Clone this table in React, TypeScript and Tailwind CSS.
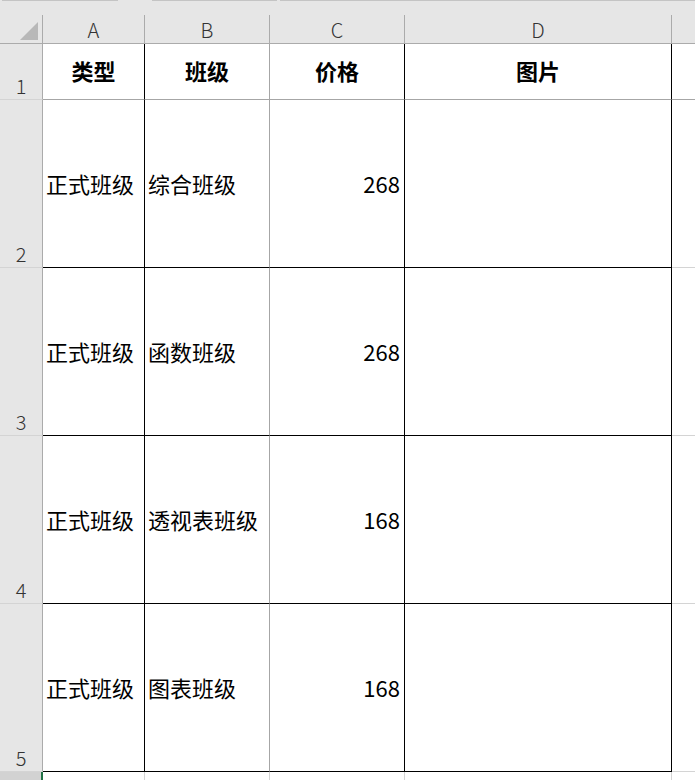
import React from "react";

const cjk = "font-['Noto_Sans_CJK_SC','Noto_Sans',sans-serif]";

const colLetters = ["A", "B", "C", "D"];

// right border per data column: A|B black, B|C plain gridline, C|D and D| black
const rightBorder = [
  "border-r border-r-black",
  "border-r border-r-[#a6a6a6]",
  "border-r border-r-black",
  "border-r border-r-black",
];

const rows = [
  { n: 1, cells: ["类型", "班级", "价格", "图片"], header: true },
  { n: 2, cells: ["正式班级", "综合班级", "268", ""] },
  { n: 3, cells: ["正式班级", "函数班级", "268", ""] },
  { n: 4, cells: ["正式班级", "透视表班级", "168", ""] },
  { n: 5, cells: ["正式班级", "图表班级", "168", ""] },
];

const Corner = () => (
  <svg width="43" height="29" viewBox="0 0 43 29" className="block">
    <polygon points="38,7 38,25 20,25" fill="#b8b8b8" />
  </svg>
);

const App: React.FC = () => {
  return (
    <div
      className={`w-[695px] h-[780px] overflow-hidden bg-white text-black ${cjk} grid grid-cols-[43px_102px_125px_135px_267px_1fr] grid-rows-[15px_29px_56px_168px_168px_168px_168px_1fr]`}
    >
      {/* top strip under the toolbar */}
      <div className="col-span-6 bg-[#e6e6e6] flex items-start">
        <div className="ml-[2px] w-[116px] h-px bg-[#c4c4c4]" />
        <div className="ml-[34px] w-[125px] h-px bg-[#c4c4c4]" />
        <div className="ml-[3px] flex-1 h-px bg-[#c4c4c4]" />
      </div>

      {/* column headers */}
      <div className="bg-[#e6e6e6] border-r border-b border-[#ababab]">
        <Corner />
      </div>
      {colLetters.map((c) => (
        <div
          key={c}
          className="bg-[#e6e6e6] border-r border-b border-[#ababab] flex items-center justify-center text-[20px] font-light text-[#333] leading-none pt-[1px]"
        >
          {c}
        </div>
      ))}
      <div className="bg-[#e6e6e6] border-b border-[#ababab]" />

      {/* data rows */}
      {rows.map((r) => (
        <React.Fragment key={r.n}>
          <div className="bg-[#e6e6e6] border-r border-r-[#ababab] border-b border-b-[#d4d4d4] flex items-end justify-center text-[20px] font-light text-[#333] leading-none pb-[3px]">
            {r.n}
          </div>
          {r.cells.map((txt, i) => {
            const bottom = r.header
              ? "border-b border-b-[#a6a6a6]"
              : "border-b border-b-black";
            let align = "justify-start pl-[3px]";
            if (r.header) align = "justify-center font-bold";
            else if (i === 2) align = "justify-end pr-[4px]";
            return (
              <div
                key={i}
                className={`${rightBorder[i]} ${bottom} flex items-center ${align} text-[22px] leading-none whitespace-nowrap ${r.header ? "pb-[4px]" : "pb-[2px]"}`}
              >
                {txt}
              </div>
            );
          })}
          <div
            className={
              r.header
                ? "border-b border-b-[#a6a6a6]"
                : "border-b border-b-[#d4d4d4]"
            }
          />
        </React.Fragment>
      ))}

      {/* row 6, cut off */}
      <div className="bg-[#d2d2d2] border-r-2 border-r-[#217346]" />
      <div className="border-r border-r-[#d4d4d4]" />
      <div className="border-r border-r-[#d4d4d4]" />
      <div className="border-r border-r-[#d4d4d4]" />
      <div className="border-r border-r-[#d4d4d4]" />
      <div />
    </div>
  );
};

export default App;
